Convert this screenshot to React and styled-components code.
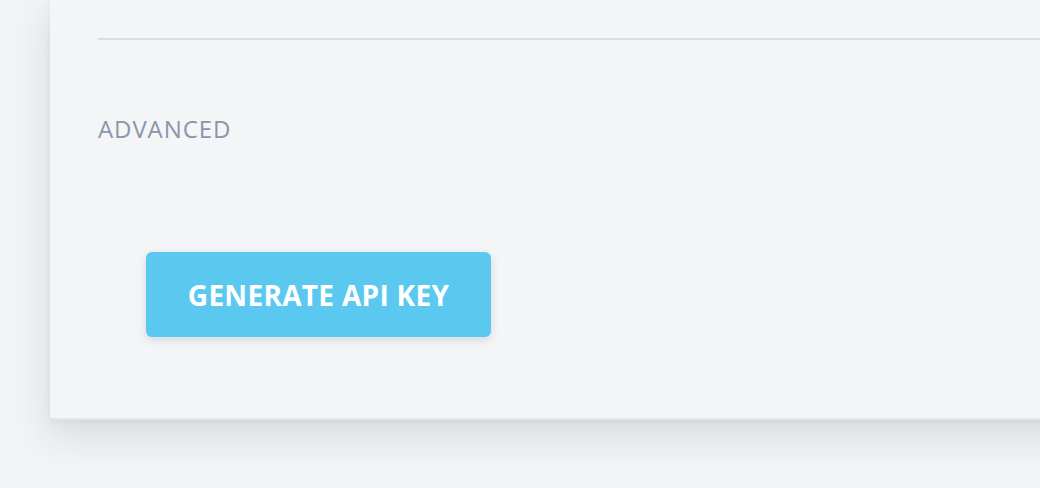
import React from "react";
import styled, { createGlobalStyle } from "styled-components";

const Global = createGlobalStyle`
  html, body { margin: 0; padding: 0; background: #f2f3f6; overflow: hidden; }
  body { font-family: "Open Sans", "Liberation Sans", sans-serif; }
`;

const Page = styled.div`
  width: 1040px;
  height: 488px;
  overflow: hidden;
  padding-left: 50px;
  box-sizing: border-box;
`;

const Card = styled.section`
  width: 1040px;
  height: 420px;
  box-sizing: border-box;
  background: #f4f5f7;
  border-bottom: 2px solid #e5e6e9;
  border-bottom-left-radius: 4px;
  box-shadow: 0 14px 36px rgba(40, 45, 70, 0.13), 0 2px 6px rgba(40, 45, 70, 0.05);
  padding: 38px 0 0 48px;
  display: flex;
  flex-direction: column;
`;

const Divider = styled.hr`
  margin: 0;
  border: none;
  height: 2px;
  background: #dcdde1;
`;

const SectionTitle = styled.h3`
  margin: 72px 0 0;
  font-size: 24px;
  font-weight: 400;
  letter-spacing: 0.9px;
  color: #8a96aa;
  line-height: normal;
`;

const Actions = styled.div`
  margin-top: 107px;
  padding-left: 48px;
  display: flex;
`;

const Button = styled.button`
  width: 345px;
  height: 85px;
  border: none;
  border-radius: 6px;
  background: #5bc9ef;
  color: #ffffff;
  font-family: "Open Sans", "Liberation Sans", sans-serif;
  font-weight: 700;
  font-size: 28px;
  letter-spacing: 0.3px;
  box-shadow: 0 3px 8px rgba(40, 60, 90, 0.15);
  display: flex;
  align-items: center;
  justify-content: center;
  cursor: pointer;
`;

export default function App() {
  return (
    <>
      <Global />
      <Page>
        <Card>
          <Divider />
          <SectionTitle>ADVANCED</SectionTitle>
          <Actions>
            <Button>GENERATE API KEY</Button>
          </Actions>
        </Card>
      </Page>
    </>
  );
}
